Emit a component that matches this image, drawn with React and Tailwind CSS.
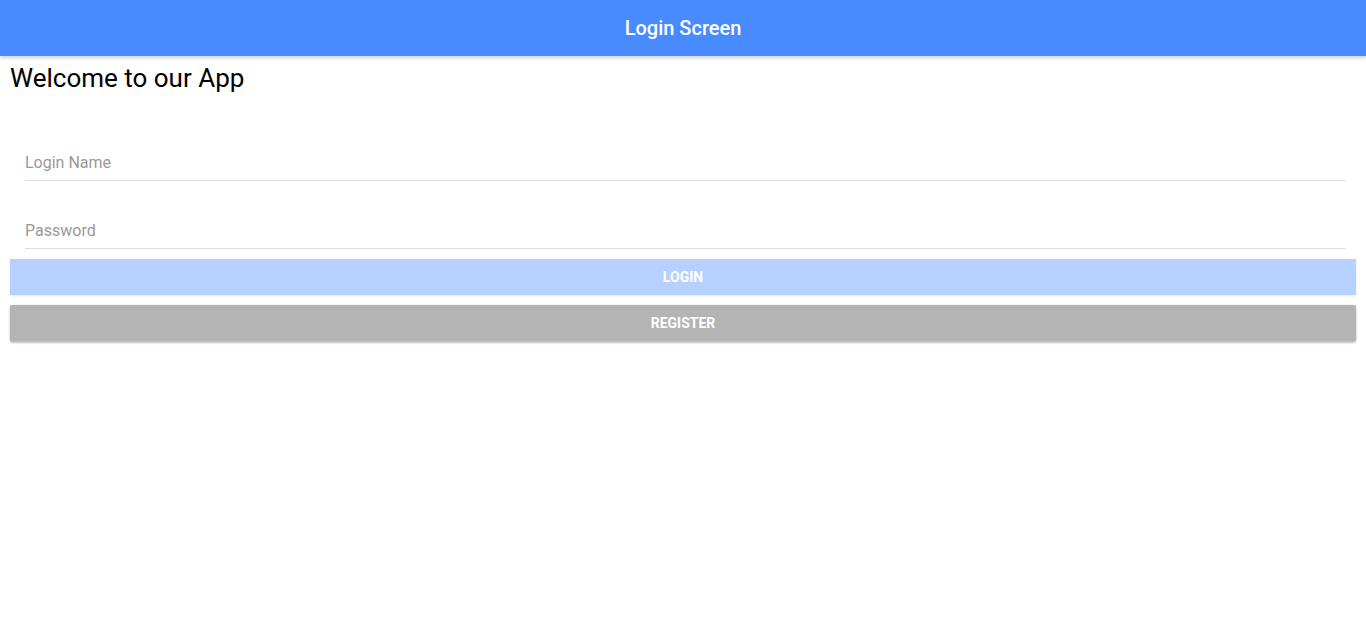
import React, { useState } from 'react';

function Field({ placeholder, type = 'text', value, onChange }) {
  return (
    <div className="ml-[15px] mr-[10px] h-[68px] flex items-end border-b border-[#dedede]">
      <input
        type={type}
        value={value}
        onChange={(e) => onChange(e.target.value)}
        placeholder={placeholder}
        className="w-full h-[34px] mb-[1px] bg-transparent outline-none text-[16px] text-black placeholder:text-[#999999]"
      />
    </div>
  );
}

export default function App() {
  const [name, setName] = useState('');
  const [password, setPassword] = useState('');
  const canLogin = name && password;

  return (
    <div className="min-h-screen bg-white font-['Roboto',sans-serif]">
      <header className="relative z-10 h-[56px] bg-[#488aff] flex items-center justify-center shadow-[0_2px_4px_rgba(0,0,0,0.2)]">
        <h1 className="text-white text-[20px] font-medium">Login Screen</h1>
      </header>

      <main className="px-[10px] pt-[7px]">
        <h2 className="text-[26px] leading-[1.2] text-black">Welcome to our App</h2>

        <div className="mt-[19px]">
          <Field placeholder="Login Name" value={name} onChange={setName} />
          <Field placeholder="Password" type="password" value={password} onChange={setPassword} />
        </div>

        <div className="mt-[10px] flex flex-col gap-[10px]">
          <button
            disabled={!canLogin}
            className="h-[36px] w-full bg-[#b6d1ff] text-white text-[14px] font-bold uppercase shadow-[0_1px_2px_rgba(0,0,0,0.1)]"
          >
            Login
          </button>
          <button className="h-[36px] w-full bg-[#b4b4b5] text-white text-[14px] font-bold uppercase rounded-[2px] shadow-[0_2px_2px_rgba(0,0,0,0.24),0_0_2px_rgba(0,0,0,0.12)]">
            Register
          </button>
        </div>
      </main>
    </div>
  );
}
